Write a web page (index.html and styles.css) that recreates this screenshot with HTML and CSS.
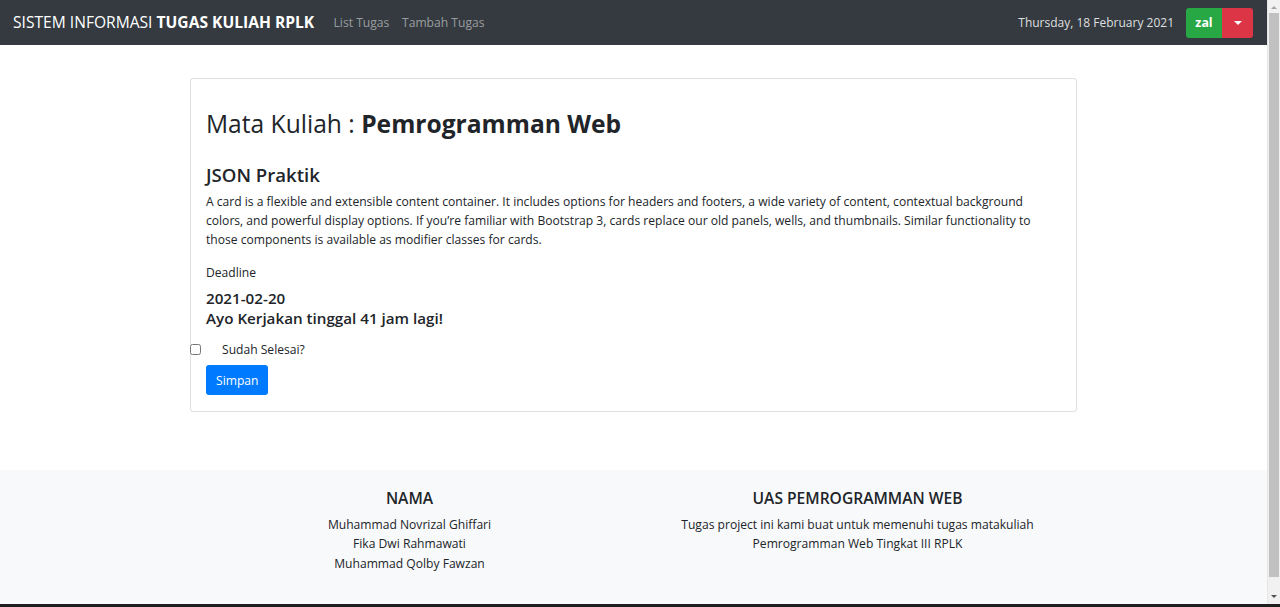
FILE: index.html
```html
<!DOCTYPE html>
<html lang="id">
<head>
<meta charset="utf-8">
<title>Sistem Informasi Tugas Kuliah RPLK</title>
<link rel="stylesheet" href="styles.css">
</head>
<body>
<div class="window">
  <div class="page">
    <nav class="navbar">
      <a class="brand" href="#">SISTEM INFORMASI <b>TUGAS KULIAH RPLK</b></a>
      <ul class="nav-links">
        <li><a href="#">List Tugas</a></li>
        <li><a href="#">Tambah Tugas</a></li>
      </ul>
      <div class="nav-right">
        <span class="date">Thursday, 18 February 2021</span>
        <div class="btn-group">
          <button class="btn-user">zal</button>
          <button class="btn-caret"><span class="caret"></span></button>
        </div>
      </div>
    </nav>

    <main class="content">
      <div class="card">
        <h2 class="matkul">Mata Kuliah : <b>Pemrogramman Web</b></h2>
        <h4 class="task-title">JSON Praktik</h4>
        <p class="desc">A card is a flexible and extensible content container. It includes options for headers and footers, a wide variety of content, contextual background colors, and powerful display options. If you’re familiar with Bootstrap 3, cards replace our old panels, wells, and thumbnails. Similar functionality to those components is available as modifier classes for cards.</p>
        <p class="deadline-label">Deadline</p>
        <h5 class="deadline">2021-02-20<br>Ayo Kerjakan tinggal 41 jam lagi!</h5>
        <label class="check"><input type="checkbox"><span>Sudah Selesai?</span></label>
        <button class="btn-save">Simpan</button>
      </div>
    </main>

    <footer class="footer">
      <div class="footer-col">
        <h5>NAMA</h5>
        <p>Muhammad Novrizal Ghiffari<br>Fika Dwi Rahmawati<br>Muhammad Qolby Fawzan</p>
      </div>
      <div class="footer-col">
        <h5>UAS PEMROGRAMMAN WEB</h5>
        <p>Tugas project ini kami buat untuk memenuhi tugas matakuliah<br>Pemrogramman Web Tingkat III RPLK</p>
      </div>
    </footer>
  </div>
  <div class="scrollbar">
    <span class="arrow up"></span>
    <span class="thumb"></span>
    <span class="arrow down"></span>
  </div>
</div>
<div class="taskbar"></div>
</body>
</html>
```

FILE: styles.css
```css
* { box-sizing: border-box; }
html, body { margin: 0; padding: 0; }
body {
  width: 1280px;
  height: 607px;
  overflow: hidden;
  font-family: "Open Sans", "Noto Sans", sans-serif;
  font-size: 12.1px;
  line-height: 19.2px;
  color: #212529;
  background: #fff;
}
.window { display: flex; height: 604px; }
.page { width: 1267px; display: flex; flex-direction: column; }

.navbar {
  height: 45px;
  background: #343a40;
  display: flex;
  align-items: center;
  padding: 0 14px 0 13px;
}
.brand {
  color: #fff;
  font-size: 15.6px;
  text-decoration: none;
  margin-right: 13px;
  white-space: nowrap;
}
.nav-links { list-style: none; display: flex; margin: 0; padding: 0; }
.nav-links a {
  color: rgba(255,255,255,.5);
  text-decoration: none;
  padding: 0 6.4px;
}
.nav-right { margin-left: auto; display: flex; align-items: center; }
.date { color: rgba(255,255,255,.85); margin-right: 12px; font-size: 12px; }
.btn-group { display: flex; height: 30px; }
.btn-group button { border: 0; color: #fff; font-family: inherit; cursor: pointer; }
.btn-user {
  background: #28a745;
  width: 36px;
  font-weight: 700;
  font-size: 12.4px;
  border-radius: 3px 0 0 3px;
}
.btn-caret {
  background: #dc3545;
  width: 31px;
  border-radius: 0 3px 3px 0;
  display: flex; align-items: center; justify-content: center;
}
.caret {
  width: 0; height: 0;
  border-left: 4px solid transparent;
  border-right: 4px solid transparent;
  border-top: 4px solid #fff;
}

.content { flex: 1; padding-top: 33px; }
.card {
  width: 887px;
  margin: 0 auto;
  border: 1px solid rgba(0,0,0,.125);
  border-radius: 3px;
  padding: 30px 15px 16px 15px;
  display: flex; flex-direction: column; align-items: flex-start;
}
.matkul { font-size: 24.6px; font-weight: 400; line-height: 30px; margin: 0 0 24px; }
.matkul b { font-weight: 700; }
.task-title { font-size: 18.6px; font-weight: 600; line-height: 23px; margin: 0 0 6px; }
.desc { margin: 0 0 13px; }
.deadline-label { margin: 0 0 6px; }
.deadline { font-size: 15.2px; font-weight: 600; line-height: 20px; margin: 0 0 12px; }
.check { display: flex; align-items: center; margin: 0 0 6px -16px; }
.check input { margin: 0 21px 0 0; width: 11px; height: 11px; }
.btn-save {
  background: #007bff;
  border: 0;
  color: #fff;
  font-family: inherit;
  font-size: 12.1px;
  height: 30px;
  padding: 0 10px;
  border-radius: 3px;
}

.footer {
  background: #f8f9fa;
  height: 134px;
  display: flex;
  justify-content: center;
  padding-top: 19px;
  text-align: center;
}
.footer-col { width: 448px; }
.footer-col h5 { font-size: 15.6px; font-weight: 600; line-height: 19px; margin: 0 0 7px; }
.footer-col p { margin: 0; line-height: 19.4px; }

.scrollbar {
  width: 13px;
  background: #f1f1f1;
  display: flex; flex-direction: column; align-items: center;
  border-left: 1px solid #e6e6e6;
}
.thumb { width: 10px; flex: 1; background: #c1c1c1; margin: 4px 0 18px; }
.arrow { width: 0; height: 0; border-left: 3px solid transparent; border-right: 3px solid transparent; }
.arrow.up { border-bottom: 3px solid #a3a3a3; margin-top: 6px; }
.arrow.down { border-top: 3px solid #505050; margin-bottom: 6px; }
.taskbar { height: 3px; background: #1f1f1f; }
```
